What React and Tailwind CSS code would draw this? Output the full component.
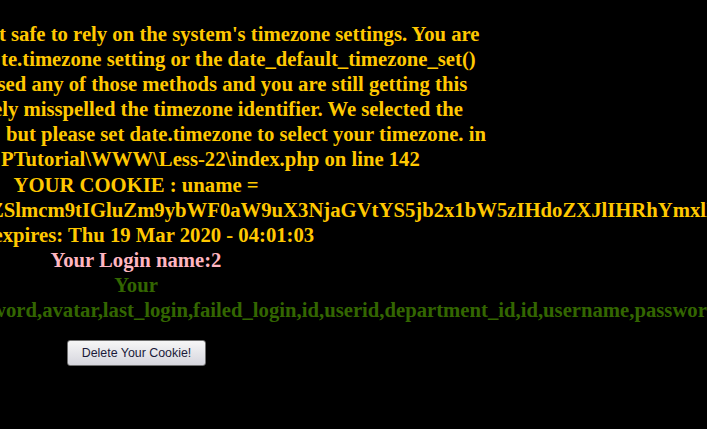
export default function App() {

  return (

    <div className="w-[707px] h-[429px] overflow-hidden bg-black">

      <div
        className="pt-[22px] text-[20.7px] leading-[25px] font-bold text-[#ffc800] whitespace-nowrap"
        style={{ fontFamily: '"Liberation Serif", "Times New Roman", serif' }}
      >

        {/* PHP WARNING (scrolled) */}

        <div className="-ml-[1px]">t safe to rely on the system's timezone settings. You are</div>
        <div className="ml-[1px]">te.timezone setting or the date_default_timezone_set()</div>
        <div className="-ml-[2.5px]">sed any of those methods and you are still getting this</div>
        <div className="-ml-[7px]">ely misspelled the timezone identifier. We selected the</div>
        <div className="ml-[6px]">but please set date.timezone to select your timezone. in</div>
        <div className="ml-[1px]">PTutorial\WWW\Less-22\index.php on line 142</div>

        {/* COOKIE OUTPUT */}

        <div className="mt-[1px] w-[272px] flex flex-col items-center">

          <div>YOUR COOKIE : uname =</div>

          <div className="self-start -ml-[10px]">
            ZSlmcm9tIGluZm9ybWF0aW9uX3NjaGVtYS5jb2x1bW5zIHdoZXJlIHRhYmxlX25hbWU9J3VzZXJzJyM=
          </div>

          <div className="self-start -ml-[6.5px]">expires: Thu 19 Mar 2020 - 04:01:03</div>

          <div className="text-[#ffb6c1]">Your Login name:2</div>

          <div className="text-[#336600]">Your</div>

          <div className="self-start -ml-[9px] text-[#336600]">
            word,avatar,last_login,failed_login,id,userid,department_id,id,username,password
          </div>

          <button
            className="mt-[17px] ml-[1px] w-[139px] h-[26px] rounded-[3px] border border-[#707070] bg-gradient-to-b from-[#f6f6f6] to-[#d6d6de] text-[12.4px] leading-none font-normal text-[#1a1a3a]"
            style={{ fontFamily: '"Liberation Sans", Arial, sans-serif' }}
          >
            Delete Your Cookie!
          </button>

        </div>

      </div>

    </div>

  );

}
